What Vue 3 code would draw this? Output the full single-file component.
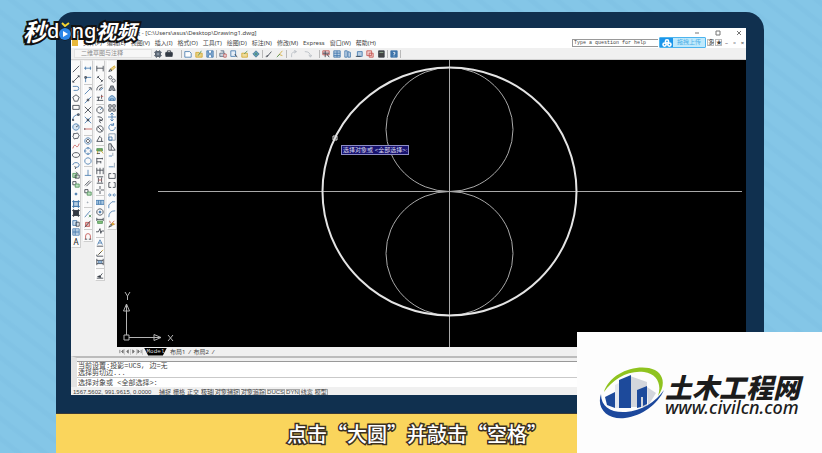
<script setup>
import { ref } from 'vue'

const menus = ['文件(F)', '编辑(E)', '视图(V)', '插入(I)', '格式(O)', '工具(T)', '绘图(D)', '标注(N)', '修改(M)', 'Express', '窗口(W)', '帮助(H)']
const tabs = ['布局1', '布局2']
const tabArrows = [
  { name: 'first', d: 'M1 1v4M5 1v4L3 3z' },
  { name: 'prev', d: 'M4 1v4L2 3z' },
  { name: 'next', d: 'M2 1v4L4 3z' },
  { name: 'last', d: 'M5 1v4M1 1v4L3 3z' },
]
const statusItems = [
  { label: '捕捉', on: false },
  { label: '栅格', on: false },
  { label: '正交', on: false },
  { label: '极轴', on: true },
  { label: '对象捕捉', on: true },
  { label: '对象追踪', on: true },
  { label: 'DUCS', on: true },
  { label: 'DYN', on: true },
  { label: '线宽', on: false },
  { label: '模型', on: true },
]

const question = ref('Type a question for help')
const workspace = ref('二维草图与注释')
const command = ref('选择对象或 <全部选择>:')

// colours
const K = '#333a44'
const B = '#3f75ab'
const R = '#c2504c'
const Y = '#d2a72c'
const G = '#4d9157'

// every icon is a list of [path, stroke, fill] on a 10x10 grid
const icons = {
  line: [['M1 9L9 1', K]],
  xline: [['M1 9L9 1M1 7v2h2M7 1h2v2', K]],
  pline: [['M1 3h5a2 2 0 0 1 0 5H2', B]],
  polygon: [['M5 1L9 4L7 9H3L1 4Z', K]],
  rect: [['M1 3H9V8H1Z', K]],
  arc: [['M1 9Q1 2 9 2', B], ['M0 8h2v2H0zM7 1h2v2H7z', K]],
  circle: [['M5 1A4 4 0 1 1 4.9 1Z', B, '#d8e6f3'], ['M5 5L8 3', K]],
  cloud: [['M2 4Q1 1 4 2Q8 0 8 3Q10 5 8 6Q8 9 5 8Q2 10 2 7Q0 5 2 4', K]],
  spline: [['M1 8Q3 2 5 5T9 2', R]],
  ellipse: [['M5 2C11 2 11 8 5 8C-1 8 -1 2 5 2Z', K]],
  earc: [['M1 5C1 1 9 1 9 5Q9 8 5 8', B], ['M3 7l2 1-1 2', K]],
  insert: [['M1 3H6V8H1Z', G, '#b9ddbe'], ['M4 5h5v4H4zM5 1l3 3', K]],
  block: [['M1 2h4v4H1z', K], ['M4 5h5v4H4z', G, '#b9ddbe']],
  point: [['M4 4h2v2H4z', B, B]],
  hatch: [['M2 2H8V8H2ZM0 2h10M0 8h10M2 0v10M8 0v10', B, '#b7cde2']],
  gradient: [['M2 2H8V8H2Z', K, K], ['M0 2h10M0 8h10M2 0v10M8 0v10', K]],
  region: [['M1 2h5v6H1z', B, '#c7dbed'], ['M5 4h4v5H5z', K]],
  table: [['M1 1H9V9H1Z', B, '#dbe8f4'], ['M1 4h8M1 6h8M4 1v8', B]],
  track: [['M0 4h9M2 2v4M8 2v4', B]],
  from: [['M2 9V3h7', B], ['M1 2h2v2H1z', K]],
  end: [['M1 9L8 2', B], ['M6 1h3v3', K]],
  mid: [['M1 9L9 1', B], ['M4 4h2v2H4z', K]],
  cross: [['M1 1L9 9M9 1L1 9', K]],
  cross2: [['M1 1L9 9M9 1L1 9', B], ['M4 4h2v2H4z', K]],
  ext: [['M0 5h10', R], ['M1 4v2', K]],
  center: [['M5 1A4 4 0 1 1 4.9 1Z', B], ['M5 3A2 2 0 1 1 4.9 3Z', K]],
  quad: [['M5 1A4 4 0 1 1 4.9 1Z', B], ['M5 0v3M5 7v3M0 5h3M7 5h3', B]],
  tangent: [['M5 1A4 4 0 1 1 4.9 1Z', B]],
  perp: [['M5 1V8M1 8h8', B]],
  parallel: [['M1 8L7 2M3 9L9 3', K]],
  node: [['M4 5h1v1H4z', '#98a3af']],
  near: [['M1 9L6 3L8 1', B], ['M6 6l3 3M9 6L6 9', G]],
  none: [['M2 3h5v5H2z', R, '#e5b9b7'], ['M1 9L8 1', K]],
  magnet: [['M2 9V5a3 3 0 0 1 6 0v4', R], ['M1 9h3M6 9h3', K]],
  dim: [['M1 1v7M9 1v7M1 4h8', K]],
  aligned: [['M2 2L8 8M1 4l3-3M6 9l3-3', K]],
  arclen: [['M1 8Q1 2 8 1M4 8Q4 5 8 4', K], ['M5 8l4-3', B]],
  ordinate: [['M1 8h8M3 8V4M7 6V1M1 4h4', K], ['M6 3h3', R]],
  radius: [['M5 1A4 4 0 1 1 4.9 1Z', K], ['M5 5L8 2', B]],
  jog: [['M2 1Q9 1 8 5L4 6L6 9', K], ['M4 4l4 2', K]],
  diameter: [['M5 1A4 4 0 1 1 4.9 1ZM2 2l6 6', K]],
  angle: [['M5 1L1 8h8M5 2Q8 3 7 8', K]],
  quick: [['M1 2h7v3H1z', G, '#6ba45e'], ['M5 3l4 5M2 5v4', Y], ['M1 8h4', K]],
  base: [['M1 1v8M1 2h7M1 6h5M8 1v2M6 5v3', K]],
  cont: [['M1 1v8M5 1v8M9 1v8M1 4h8', K]],
  space: [['M1 1h8M1 9h8M3 2v6M7 2v6', K], ['M3 5h4', R]],
  dbreak: [['M0 5h4M6 5h4M5 0v4M5 6v4', K]],
  tol: [['M0 3h10v5H0z', B, '#a9c8e2'], ['M3 3v5M6 3v5', B]],
  mark: [['M5 1A4 4 0 1 1 4.9 1Z', K], ['M4 4h2v2H4z', B, B]],
  inspect: [['M1 1v4M9 1v4M1 3h8', K], ['M2 5h6v3H2z', G, '#8cc67e']],
  jogline: [['M0 6h3l2-4 1 6 1-3h3', K]],
  tedit: [['M2 7L5 1L8 7M3 5h4', B], ['M1 9h8', K]],
  dedit: [['M3 7L9 1', Y], ['M1 9h8M1 7v2M3 7l4-4', K]],
  dupdate: [['M1 1v8M9 1v8M1 3h8M1 7h8', K], ['M3 4h4v2H3z', B]],
  brush: [['M1 9h8M4 8l4-5', K], ['M2 7l3-1 1 2z', K, K]],
  erase: [['M3 5L8 1L9 3L5 7Z', Y, '#ecd28a'], ['M1 8l2-3 2 2z', K]],
  copy: [['M3 1A2 2 0 1 1 2.9 1Z', K], ['M7 5A2 2 0 1 1 6.9 5Z', K]],
  mirror: [['M4 2v6H1zM6 2v6h3z', K, '#c1cad4']],
  offset: [['M1 8V5Q5-1 9 5v3z', B, '#a9c8e2'], ['M3 8V6h4v2', B]],
  array: [['M1 1h3v3H1zM6 1h3v3H6zM1 6h3v3H1zM6 6h3v3H6z', K]],
  move: [['M5 0V10M0 5H10M3 2l2-2 2 2M3 8l2 2 2-2', B]],
  rotate: [['M7 2A4 4 0 1 0 9 5M7 0v3H4', B]],
  scale: [['M1 1h8v8H1z', '#7c8ea2'], ['M1 5h4v4H1z', B]],
  stretch: [['M1 1h3v8H1zM4 2L9 9H4', K]],
  trim: [['M1 5h4', B], ['M6 1v4', '#8a99aa']],
  extend: [['M1 6h6', B], ['M8 1v6', '#8a99aa']],
  breakpt: [['M4 2H1v6h8V2H6', K]],
  breakat: [['M3 2H1v6h3M7 2h2v6H6', K]],
  join: [['M0 5h3M7 5h3M2 3l2 2-2 2M8 3L6 5l2 2', B]],
  chamfer: [['M1 9V5L5 1h4', B]],
  fillet: [['M1 9Q1 1 9 1', B]],
  explode: [['M1 9l3-4 1 2z', K], ['M4 5l4-4M5 6l4-1M3 4L2 1', R], ['M5 4h2v2H5z', Y, Y]],
  gear: [['M2 2h6v6H2z', K, '#8b96a3'], ['M0 3h10M0 7h10M3 0v10M7 0v10', '#5a6775']],
  lock: [['M1 3h8v5H1z', K, K], ['M3 3V1h4v2M0 5h10', K]],
  fresh: [['M1 2h6l2 2v5H1z', B, '#fff']],
  open: [['M1 3h4l1 1h3v5H1z', Y, '#e8cf82'], ['M4 7l4-6', G]],
  save: [['M1 1h8v8H1z', B, '#8fb3d7'], ['M3 1v3h4V1M3 9V6h4v3', B, '#fff']],
  print: [['M1 4h6v4H1zM2 1h4v3', '#5b6b80', '#c9d3df'], ['M6 5h3v4H6z', R, '#e7edf4']],
  preview: [['M1 1h6v7H1z', B, '#e6eef7'], ['M6 5l3 4', K]],
  publish: [['M1 4h7v5H1z', Y, '#efdb9b'], ['M4 5l4-4', G]],
  globe: [['M5 1L9 5L5 9L1 5Z', '#46788f', '#6a9fd0'], ['M3 5h4M5 3v4', G]],
  match: [['M2 9L8 2', K], ['M1 8l3-1', K]],
  paint: [['M2 8L8 1M5 6l3 1', Y], ['M1 9l4-4', G]],
  undo: [['M2 9V6Q2 2 8 2', '#b5bbc2'], ['M5 0L8 2L5 4', '#b5bbc2']],
  redo: [['M1 2Q8 2 8 8M6 6l2 3 2-3', '#b5bbc2']],
  props: [['M1 1h8v5H1z', R, '#ead4d9'], ['M1 4h8M4 1v8M6 5l3 4', K]],
  center2: [['M1 1h8v8H1z', B, '#b7cde2'], ['M1 4h8M1 7h8M5 1v8', B]],
  palette: [['M1 1h3v8H1zM5 2l3 1v6H5z', B, '#c5d6e8']],
  sheet: [['M3 2h6v6H3z', B, '#b7cde2'], ['M1 8h6', K]],
  markup: [['M1 1h6v6H1zM4 4h5v5H4z', R, '#f2cfcd']],
  calc: [['M2 1h7v8H2z', K, '#444'], ['M3 3h5', '#9dbf9d']],
  help: [['M1 1h8v8H1z', B, B], ['M4 3h2v2H5v1M5 7v1', '#fff']],
}

const topBar = [
  ['gear', 'lock'],
  ['fresh', 'open', 'save'],
  ['print', 'preview', 'publish', 'globe'],
  ['match', 'paint'],
  ['undo', 'redo'],
  ['props', 'center2', 'palette', 'sheet', 'markup', 'calc'],
  ['help'],
]

const sideBars = [
  { name: 'draw', items: ['line', 'xline', 'pline', 'polygon', 'rect', 'arc', 'circle', 'cloud', 'spline', 'ellipse', 'earc', 'insert', 'block', 'point', 'hatch', 'gradient', 'region', 'table', 'A'] },
  { name: 'snap', items: ['track', 'from', '|', 'end', 'mid', 'cross', 'cross2', 'ext', '|', 'center', 'quad', 'tangent', '|', 'perp', 'parallel', 'block', 'node', '|', 'near', 'none', '|', 'magnet'] },
  { name: 'dims', items: ['dim', 'aligned', 'arclen', 'ordinate', '|', 'radius', 'jog', 'diameter', 'angle', '|', 'quick', 'base', 'cont', 'space', 'dbreak', '|', 'tol', 'mark', 'inspect', 'jogline', '|', 'tedit', 'dedit', 'dupdate', '|', 'brush'] },
  { name: 'modify', items: ['erase', 'copy', 'mirror', 'offset', 'array', 'move', 'rotate', 'scale', 'stretch', 'trim', 'extend', 'breakpt', 'breakat', 'join', 'chamfer', 'fillet', 'explode'] },
]
</script>

<template>
  <div class="page">
    <div class="device">
      <div class="window">
        <header class="titlebar">
          <span class="title">AutoCAD 2008 中文正版 - [C:\Users\asus\Desktop\Drawing1.dwg]</span>
          <div class="win-buttons">
            <button aria-label="minimize"><svg viewBox="0 0 8 8"><path d="M2 4h4" /></svg></button>
            <button aria-label="maximize"><svg viewBox="0 0 8 8"><path d="M2 2h4v4H2z" /></svg></button>
            <button aria-label="close"><svg viewBox="0 0 8 8"><path d="M2 2l4 4M6 2L2 6" /></svg></button>
          </div>
        </header>

        <nav class="menubar">
          <span class="app-mark"></span>
          <button v-for="m in menus" :key="m">{{ m }}</button>
          <div class="help-box">
            <input v-model="question" type="text" aria-label="help" />
            <button class="upload">
              <span class="upload-icon">
                <svg viewBox="0 0 12 10">
                  <circle cx="6" cy="3" r="2" />
                  <circle cx="3" cy="7" r="2" />
                  <circle cx="9" cy="7" r="2" />
                </svg>
              </span>
              <span class="upload-text">拖拽上传</span>
            </button>
            <button class="tiny boxed">多</button>
            <button class="tiny boxed">★</button>
            <button class="tiny">–</button>
            <button class="tiny">▫</button>
            <button class="tiny">×</button>
          </div>
        </nav>

        <div class="toolbar">
          <select v-model="workspace" aria-label="workspace">
            <option>二维草图与注释</option>
          </select>
          <div v-for="(group, i) in topBar" :key="i" class="tool-group" :class="{ wide: group.includes('undo') }">
            <button v-for="t in group" :key="t" :aria-label="t">
              <svg viewBox="0 0 10 10">
                <path v-for="(p, k) in icons[t]" :key="k" :d="p[0]" :stroke="p[1]" :fill="p[2] || 'none'" />
              </svg>
            </button>
          </div>
        </div>

        <div class="workarea">
          <aside class="side">
            <div v-for="bar in sideBars" :key="bar.name" class="side-bar" :class="bar.name">
              <template v-for="(t, i) in bar.items" :key="i">
                <i v-if="t === '|'" class="sep"></i>
                <button v-else-if="t === 'A'" class="letter">A</button>
                <button v-else :aria-label="t">
                  <svg viewBox="0 0 10 10">
                    <path v-for="(p, k) in icons[t]" :key="k" :d="p[0]" :stroke="p[1]" :fill="p[2] || 'none'" />
                  </svg>
                </button>
              </template>
            </div>
          </aside>

          <main class="drawing">
            <div class="canvas">
              <svg class="model" viewBox="0 0 629 287">
                <g class="thin">
                  <path d="M41 131.500H625M332.500 0V287" />
                  <ellipse cx="332.500" cy="69.500" rx="63.500" ry="62" />
                  <ellipse cx="332.500" cy="193.500" rx="63.500" ry="62" />
                </g>
                <ellipse class="thick" cx="332.500" cy="131.500" rx="127" ry="124" />
                <path class="pick" d="M216 76h4v4h-4z" />
                <g class="ucs">
                  <path d="M7 275h5v5H7zM9.500 275V244M12 277.500H44M9.500 244l-3 7h6zM44 277.500l-7-3v6z" />
                  <path d="M8 232l2.500 4L13 232M10.500 236v4M51 275l5 6M56 275l-5 6" />
                </g>
              </svg>
              <span class="prompt-tip">选择对象或 &lt;全部选择&gt;:</span>
            </div>
            <div class="tabs">
              <span class="tab-arrows">
                <button v-for="a in tabArrows" :key="a.name" :aria-label="a.name">
                  <svg viewBox="0 0 6 6"><path :d="a.d" /></svg>
                </button>
              </span>
              <button class="tab active">Model</button>
              <button v-for="t in tabs" :key="t" class="tab">{{ t }}<em>/</em></button>
            </div>
          </main>
        </div>

        <section class="command">
          <div class="log">
            <p>当前设置:投影=UCS, 边=无</p>
            <p>选择剪切边...</p>
          </div>
          <input v-model="command" type="text" aria-label="command" />
        </section>

        <footer class="status">
          <span class="coords">1567.5602, 991.9615, 0.0000</span>
          <button v-for="s in statusItems" :key="s.label" :class="{ on: s.on }">{{ s.label }}</button>
        </footer>
      </div>
    </div>

    <div class="caption">点击“大圆”并敲击“空格”</div>

    <div class="watermark">
      <span class="cn big">秒</span>
      <span class="en">d</span>
      <svg viewBox="0 0 12 20">
        <path d="M3 2L6 5L10 2" class="tick" />
        <circle cx="6" cy="13" r="6" />
        <path d="M4 10L9 13L4 16Z" class="play" />
      </svg>
      <span class="en">ng</span>
      <span class="cn">视频</span>
    </div>

    <div class="brand">
      <svg viewBox="0 0 66 54">
        <path d="M5 25C10 8 32-2 50 1C64 4 68 16 59 29C63 17 58 7 45 5C29 3 14 12 5 25Z" fill="#8fc31f" />
        <path d="M31 9L48 15V40H31Z" fill="#d3d6dc" />
        <path d="M48 20L57 26L49 39Z" fill="#d3d6dc" />
        <path d="M6 30L16 25V41L8 38Z" fill="#1d4a9b" />
        <path d="M16 18L20 16V41H16Z" fill="#e4e8ef" />
        <path d="M20 13L32 8V41H20Z" fill="#1d4a9b" />
        <path d="M38 23L48 19V37L44 39V30H42V40L38 41Z" fill="#1d4a9b" />
        <path d="M2 27C-3 42 9 53 26 51C43 49 59 37 65 23C57 35 42 44 27 45C12 46 2 40 2 27Z" fill="#1c489c" />
      </svg>
      <div class="brand-text">
        <strong>土木工程网</strong>
        <a href="#">www.civilcn.com</a>
      </div>
    </div>
  </div>
</template>

<style>
body {
  margin: 0;
}
</style>

<style scoped>
* {
  box-sizing: border-box;
}

.page {
  background: repeating-linear-gradient(38deg, #84c6e7 0 9px, #81c3e5 11px 14px, #84c6e7 16px);
  display: flex;
  flex-direction: column;
  font-family: 'Noto Sans', 'Noto Sans CJK SC', sans-serif;
  min-height: 100vh;
  overflow: hidden;
  padding: 12px 58px 0 56px;
  position: relative;
}

button,
input,
select {
  background: none;
  border: 0;
  color: inherit;
  font: inherit;
  margin: 0;
  padding: 0;
}

svg {
  display: block;
}

.device {
  background: #10304f;
  border-bottom: 1px solid #3b3a36;
  border-radius: 18px 18px 0 0;
  display: flex;
  flex: 1;
  padding: 16px 18px 18px 15px;
}

.window {
  background: #f0f0f0;
  color: #444;
  display: flex;
  flex: 1;
  flex-direction: column;
  font-size: 6px;
  min-width: 0;
}

.titlebar {
  align-items: center;
  background: #fff;
  display: flex;
  height: 9px;
  justify-content: space-between;
  line-height: 8px;
  padding-left: 3px;
}

.win-buttons {
  display: flex;
  gap: 13px;
  padding-right: 3px;
}

.win-buttons button,
.win-buttons svg {
  height: 8px;
  width: 8px;
}

.win-buttons path {
  fill: none;
  stroke: #777;
  stroke-width: 1;
}

.menubar {
  align-items: center;
  background: #fff;
  display: flex;
  gap: 5px;
  height: 11px;
  line-height: 10px;
  padding-left: 1px;
  white-space: nowrap;
}

.app-mark {
  background: #e9b93b;
  height: 6px;
  width: 6px;
}

.help-box {
  align-items: center;
  display: flex;
  gap: 1px;
  margin-left: auto;
}

.help-box input {
  border: 1px solid #999;
  border-right: 0;
  font-family: 'Liberation Mono', monospace;
  font-size: 5px;
  height: 8px;
  line-height: 6px;
  padding: 0 1px;
  width: 86px;
}

.upload {
  background: #bfe9fc;
  border: 1px solid #4db4ee;
  border-radius: 1px;
  display: flex;
  height: 11px;
  width: 47px;
}

.upload-icon {
  align-items: center;
  background: #1c95ea;
  display: flex;
  justify-content: center;
  width: 13px;
}

.upload-icon svg {
  height: 8px;
  width: 10px;
}

.upload-icon circle {
  fill: none;
  stroke: #fff;
  stroke-width: 2;
}

.upload-text {
  color: #4eaee6;
  flex: 1;
  line-height: 9px;
  text-align: center;
}

.tiny {
  height: 7px;
  line-height: 6px;
  width: 7px;
}

.tiny.boxed {
  border: 1px solid #bbb;
  line-height: 5px;
}

.toolbar {
  align-items: center;
  border-bottom: 1px solid #d2d2d2;
  display: flex;
  height: 12px;
  padding-left: 3px;
}

.toolbar select {
  appearance: none;
  background: #f7f7f7;
  border: 1px solid #e2e2e2;
  color: #8c8c8c;
  height: 9px;
  line-height: 7px;
  padding-left: 6px;
  width: 78px;
}

.tool-group {
  border-right: 1px solid #b9b9b9;
  display: flex;
  gap: 3px;
  padding: 0 2px;
}

.tool-group:first-of-type {
  padding-right: 8px;
}

.tool-group.wide {
  gap: 6px;
  padding: 0 7px 0 3px;
}

.tool-group button,
.tool-group svg {
  height: 8px;
  width: 8px;
}

.workarea {
  display: flex;
  flex: 1;
}

.side {
  align-items: flex-start;
  display: flex;
  gap: 2px;
  padding-right: 1px;
  width: 46px;
}

.side-bar {
  align-items: center;
  background: #fafafa;
  border: 1px solid #cfcfcf;
  border-top-color: #eee;
  border-left-color: #fff;
  display: flex;
  flex: 1;
  flex-direction: column;
  justify-content: space-between;
  padding: 4px 0 1px;
}

.draw {
  height: 188px;
}

.snap {
  height: 182px;
}

.dims {
  height: 221px;
}

.modify {
  height: 170px;
}

.side-bar button,
.side-bar svg {
  height: 8px;
  width: 8px;
}

.side-bar .letter {
  color: #222;
  font-size: 8px;
  line-height: 8px;
}

.sep {
  border-top: 1px solid #ccc;
  width: 8px;
}

.drawing {
  display: flex;
  flex: 1;
  flex-direction: column;
  min-width: 0;
}

.canvas {
  background: #000;
  flex: 1;
  position: relative;
}

.model {
  height: auto;
  width: 100%;
}

.model path,
.model ellipse {
  fill: none;
  stroke: #a9a9a9;
  stroke-width: 1;
}

.model .thick {
  stroke: #e4e4e4;
  stroke-width: 2;
}

.model .pick {
  stroke: #ddd;
}

.model .ucs path {
  stroke: #b4b4b4;
}

.prompt-tip {
  background: #17126e;
  border: 1px solid #8d8dc4;
  color: #d9d9ee;
  font-family: 'Liberation Sans', 'Noto Sans CJK SC', sans-serif;
  left: 224px;
  line-height: 8px;
  padding: 0 1px;
  position: absolute;
  top: 85px;
  white-space: nowrap;
}

.tabs {
  align-items: center;
  display: flex;
  height: 9px;
  line-height: 8px;
  padding-left: 2px;
}

.tab-arrows {
  display: flex;
  width: 25px;
}

.tab-arrows button {
  border-right: 1px solid #ccc;
  height: 6px;
  width: 6px;
}

.tab-arrows svg {
  height: 5px;
  width: 5px;
}

.tab-arrows path {
  fill: #777;
  stroke: #777;
  stroke-width: 1;
}

.tab {
  padding-left: 3px;
}

.tab em {
  padding-left: 3px;
}

.tab.active {
  background: #000;
  clip-path: polygon(0 0, 100% 0, 82% 100%, 18% 100%);
  color: #ddd;
  font-family: 'Liberation Mono', monospace;
  height: 8px;
  padding: 0;
  width: 23px;
}

.command {
  background: #fff;
  border-left: 6px solid #e3e3e3;
  border-top: 2px solid #bcbcbc;
  box-shadow: inset 0 3px #f0f0f0, inset 0 4px #999;
  font-family: 'Liberation Mono', 'Noto Sans CJK SC', monospace;
  font-size: 7px;
  height: 31px;
  line-height: 7px;
}

.log {
  border-bottom: 1px solid #c9c9c9;
  padding: 5px 1px 0;
}

.log p {
  margin: 0;
}

.command input {
  display: block;
  height: 8px;
  padding: 0 1px;
  width: 100%;
}

.status {
  align-items: flex-start;
  display: flex;
  font-family: 'Liberation Sans', 'Noto Sans CJK SC', sans-serif;
  gap: 2px;
  height: 8px;
  line-height: 7px;
  overflow: hidden;
  padding-left: 2px;
  padding-top: 2px;
  white-space: nowrap;
}

.coords {
  width: 84px;
}

.status .on {
  box-shadow: inset 0 1px #aaa, 1px 0 #aaa;
}

.caption {
  -webkit-text-stroke: 3px #3b3020;
  background: #fad55c;
  color: #fff;
  font-family: 'Noto Sans CJK SC', sans-serif;
  font-size: 20px;
  font-weight: 500;
  height: 40px;
  line-height: 40px;
  padding-left: 14px;
  paint-order: stroke fill;
  text-align: center;
}

.watermark {
  -webkit-text-stroke: 4px #111;
  align-items: center;
  color: #fff;
  display: flex;
  font-style: italic;
  left: 23px;
  line-height: 28px;
  paint-order: stroke fill;
  position: absolute;
  top: 17px;
}

.watermark .cn {
  font-family: 'Noto Sans CJK SC', sans-serif;
  font-size: 20px;
  font-weight: 700;
}

.watermark .big {
  font-size: 24px;
}

.watermark .en {
  font-family: 'Noto Sans', sans-serif;
  font-size: 20px;
  font-style: normal;
  font-weight: 500;
}

.watermark svg {
  height: 20px;
  overflow: visible;
  width: 12px;
}

.watermark circle {
  fill: #2b86e8;
  stroke: #111;
  stroke-width: 1;
}

.watermark .tick {
  fill: none;
  stroke: #f6d531;
  stroke-width: 2;
}

.watermark .play {
  fill: #fff;
}

.brand {
  align-items: flex-start;
  background: #fdfdfd;
  bottom: 0;
  display: flex;
  height: 122px;
  padding: 35px 21px 0 22px;
  position: absolute;
  right: 0;
}

.brand svg {
  height: 54px;
  width: 66px;
}

.brand-text {
  color: #1c1c1c;
  display: flex;
  flex-direction: column;
  padding-top: 6px;
  width: 136px;
}

.brand strong {
  font-family: 'Noto Sans CJK SC', sans-serif;
  font-size: 27px;
  font-style: italic;
  font-weight: 900;
  line-height: 27px;
  white-space: nowrap;
}

.brand a {
  color: inherit;
  font-family: 'Noto Sans', sans-serif;
  font-size: 18px;
  font-style: italic;
  font-weight: 500;
  line-height: 14px;
  text-decoration: none;
}
</style>
